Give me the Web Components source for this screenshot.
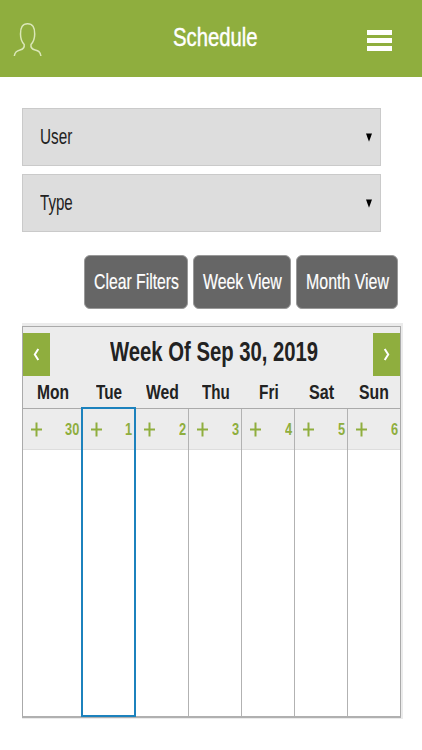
<!DOCTYPE html>
<html lang="en"><head><meta charset="utf-8"><title>Schedule</title>
<style>
body{margin:0;background:#fff;font-family:"Liberation Sans",Arial,sans-serif;color:#222}
</style></head><body>
<schedule-page></schedule-page>
<script>
// Condensed label: scales its text horizontally to the width given in "w".
class NarrowText extends HTMLElement{
  connectedCallback(){
    const w=+this.getAttribute('w');
    this.attachShadow({mode:'open'}).innerHTML=`<style>
      :host{display:block;width:${w}px;line-height:1.15;white-space:nowrap;flex:none}
      span{display:inline-block;transform-origin:0 50%}</style><span><slot></slot></span>`;
    const s=this.shadowRoot.querySelector('span');
    s.style.transform=`scaleX(${w/s.offsetWidth})`;
  }
}
class AppHeader extends HTMLElement{
  connectedCallback(){
    this.attachShadow({mode:'open'}).innerHTML=`<style>
      :host{display:grid;grid-template-columns:160px 1fr auto;height:77px;box-sizing:border-box;background:#8fae3e;color:#fff;padding:0 30px 0 13px}
      .user{margin-top:22px}
      .title{font-size:26.5px;margin-top:22px;-webkit-text-stroke:.45px #fff}
      .menu{display:grid;gap:3px;width:25px;margin-top:30px;align-content:start}
      .menu i{height:5px;background:#fff}
    </style>
    <svg class="user" width="30" height="36" viewBox="0 0 30 36" fill="none" stroke="#dbe7b8" stroke-width="1.5"><path d="M1.3 34C2 29.5 4 28.7 7 28C10 27.3 11.6 25.5 11.2 22.5C8.8 20 7.5 16 7.5 12C7.4 5.5 9.5 1.7 14.6 1.7S21.8 5.5 21.7 12C21.7 16 20.3 20 18 22.5C17.5 25.5 19.2 27.3 22.2 28C25.3 28.7 27.2 29.5 27.9 34"/></svg>
    <narrow-text class="title" w="85">Schedule</narrow-text>
    <div class="menu"><i></i><i></i><i></i></div>`;
  }
}
class FilterSelect extends HTMLElement{
  connectedCallback(){
    this.attachShadow({mode:'open'}).innerHTML=`<style>
      :host{display:flex;align-items:center;justify-content:space-between;width:359px;height:58px;box-sizing:border-box;background:#ddd;border:1px solid #cacaca;padding:0 8px 0 17px;font-size:21.5px}
      svg{margin-top:1px}
    </style><narrow-text w="${this.getAttribute('w')}">${this.getAttribute('label')}</narrow-text>
    <svg width="6" height="9"><path d="M0 .5H6L3 8.7Z" fill="#000"/></svg>`;
  }
}
class ActionButton extends HTMLElement{
  connectedCallback(){
    this.attachShadow({mode:'open'}).innerHTML=`<style>
      :host{display:flex;justify-content:center;align-items:center;height:54px;box-sizing:border-box;background:#666;border:1px solid #999;border-radius:6px;color:#fff;font-size:21.5px;padding-top:1px;-webkit-text-stroke:.2px #fff}
      </style><narrow-text w="${this.getAttribute('w')}"></narrow-text>`;
    this.shadowRoot.querySelector('narrow-text').replaceWith(Object.assign(document.createElement('template'),{innerHTML:`<narrow-text w="${this.getAttribute('w')}">${this.getAttribute('label')}</narrow-text>`}).content);
  }
}
class WeekCalendar extends HTMLElement{
  connectedCallback(){
    const days=[['Mon',32,30],['Tue',26,1],['Wed',33,2],['Thu',28,3],['Fri',20,4],['Sat',25,5],['Sun',30,6]];
    const heads=days.map(d=>`<narrow-text w="${d[1]}">${d[0]}</narrow-text>`).join('');
    const cols=days.map((d,i)=>`<div class="day ${i==1?'today':''}"><div class="top"><svg width="12" height="15"><path d="M0 7.5H11M5.5 .5V14.5" stroke="#8fae3e" stroke-width="2"/></svg><narrow-text w="${i?7:14}">${d[2]}</narrow-text></div></div>`).join('');
    const arrow=p=>`<div class="nav"><svg width="7" height="13" fill="none" stroke="#fff" stroke-width="2"><path d="${p}"/></svg></div>`;
    this.attachShadow({mode:'open'}).innerHTML=`<style>
      :host{display:block;width:381px;height:396px;box-sizing:border-box;border:solid #ebebeb;border-width:3px 2px 1px 0;background:#fff}
      .frame{height:392px;box-sizing:border-box;border:1px solid #aaa;border-bottom:2px solid #b0b0b0;display:grid;grid-template-rows:52px 30px 1fr}
      .bar{background:#ececec;display:flex;justify-content:space-between;padding-top:6px}
      .bar narrow-text{font-size:27px;font-weight:bold;margin:4px 0 0 4px}
      .nav{width:27px;height:43px;background:#8fae3e;display:flex;align-items:center;justify-content:center}
      .names,.days{display:grid;grid-template-columns:59px 54px 53px 53px 53px 53px 1fr}
      .names{background:#ececec;border-bottom:1px solid #aaa;box-sizing:border-box;font-weight:bold;font-size:20px;justify-items:center;padding-top:2px}
      .day{border-right:1px solid #b2b2b2;box-sizing:border-box}
      .day:first-child,.day:last-child{border-right:0}
      .today{border:2px solid #1c82bd;margin:-2px 0 -1px -1px;z-index:1}
      .top{height:41px;box-sizing:border-box;background:#ececec;border-bottom:1px solid #ddd;display:flex;justify-content:space-between;align-items:center;padding:1px 2px 0 8px;font-weight:bold;font-size:16.5px;color:#8fae3e}
      .day:first-child .top{padding-right:3px}
      .today .top{padding:1px 2px 0 8px}
    </style><div class="frame">
    <div class="bar">${arrow('M5.3 1L1.8 6.5L5.3 12')}<narrow-text w="208">Week Of Sep 30, 2019</narrow-text>${arrow('M1.7 1L5.2 6.5L1.7 12')}</div>
    <div class="names">${heads}</div><div class="days">${cols}</div></div>`;
  }
}
class SchedulePage extends HTMLElement{
  connectedCallback(){
    this.attachShadow({mode:'open'}).innerHTML=`<style>
      :host{display:block;height:750px;background:#fff}
      main{padding:31px 0 0 22px;display:flex;flex-direction:column;align-items:flex-start}
      .filters{display:grid;gap:8px}
      .actions{display:grid;grid-template-columns:104px 98px 102px;gap:5px;margin:23px 0 14px 62px}
    </style><app-header></app-header><main>
    <div class="filters"><filter-select label="User" w="32"></filter-select><filter-select label="Type" w="33"></filter-select></div>
    <div class="actions"><action-button w="85" label="Clear Filters"></action-button><action-button w="79" label="Week View"></action-button><action-button w="83" label="Month View"></action-button></div>
    <week-calendar></week-calendar></main>`;
  }
}
customElements.define('narrow-text',NarrowText);
customElements.define('app-header',AppHeader);
customElements.define('filter-select',FilterSelect);
customElements.define('action-button',ActionButton);
customElements.define('week-calendar',WeekCalendar);
customElements.define('schedule-page',SchedulePage);
</script></body></html>
